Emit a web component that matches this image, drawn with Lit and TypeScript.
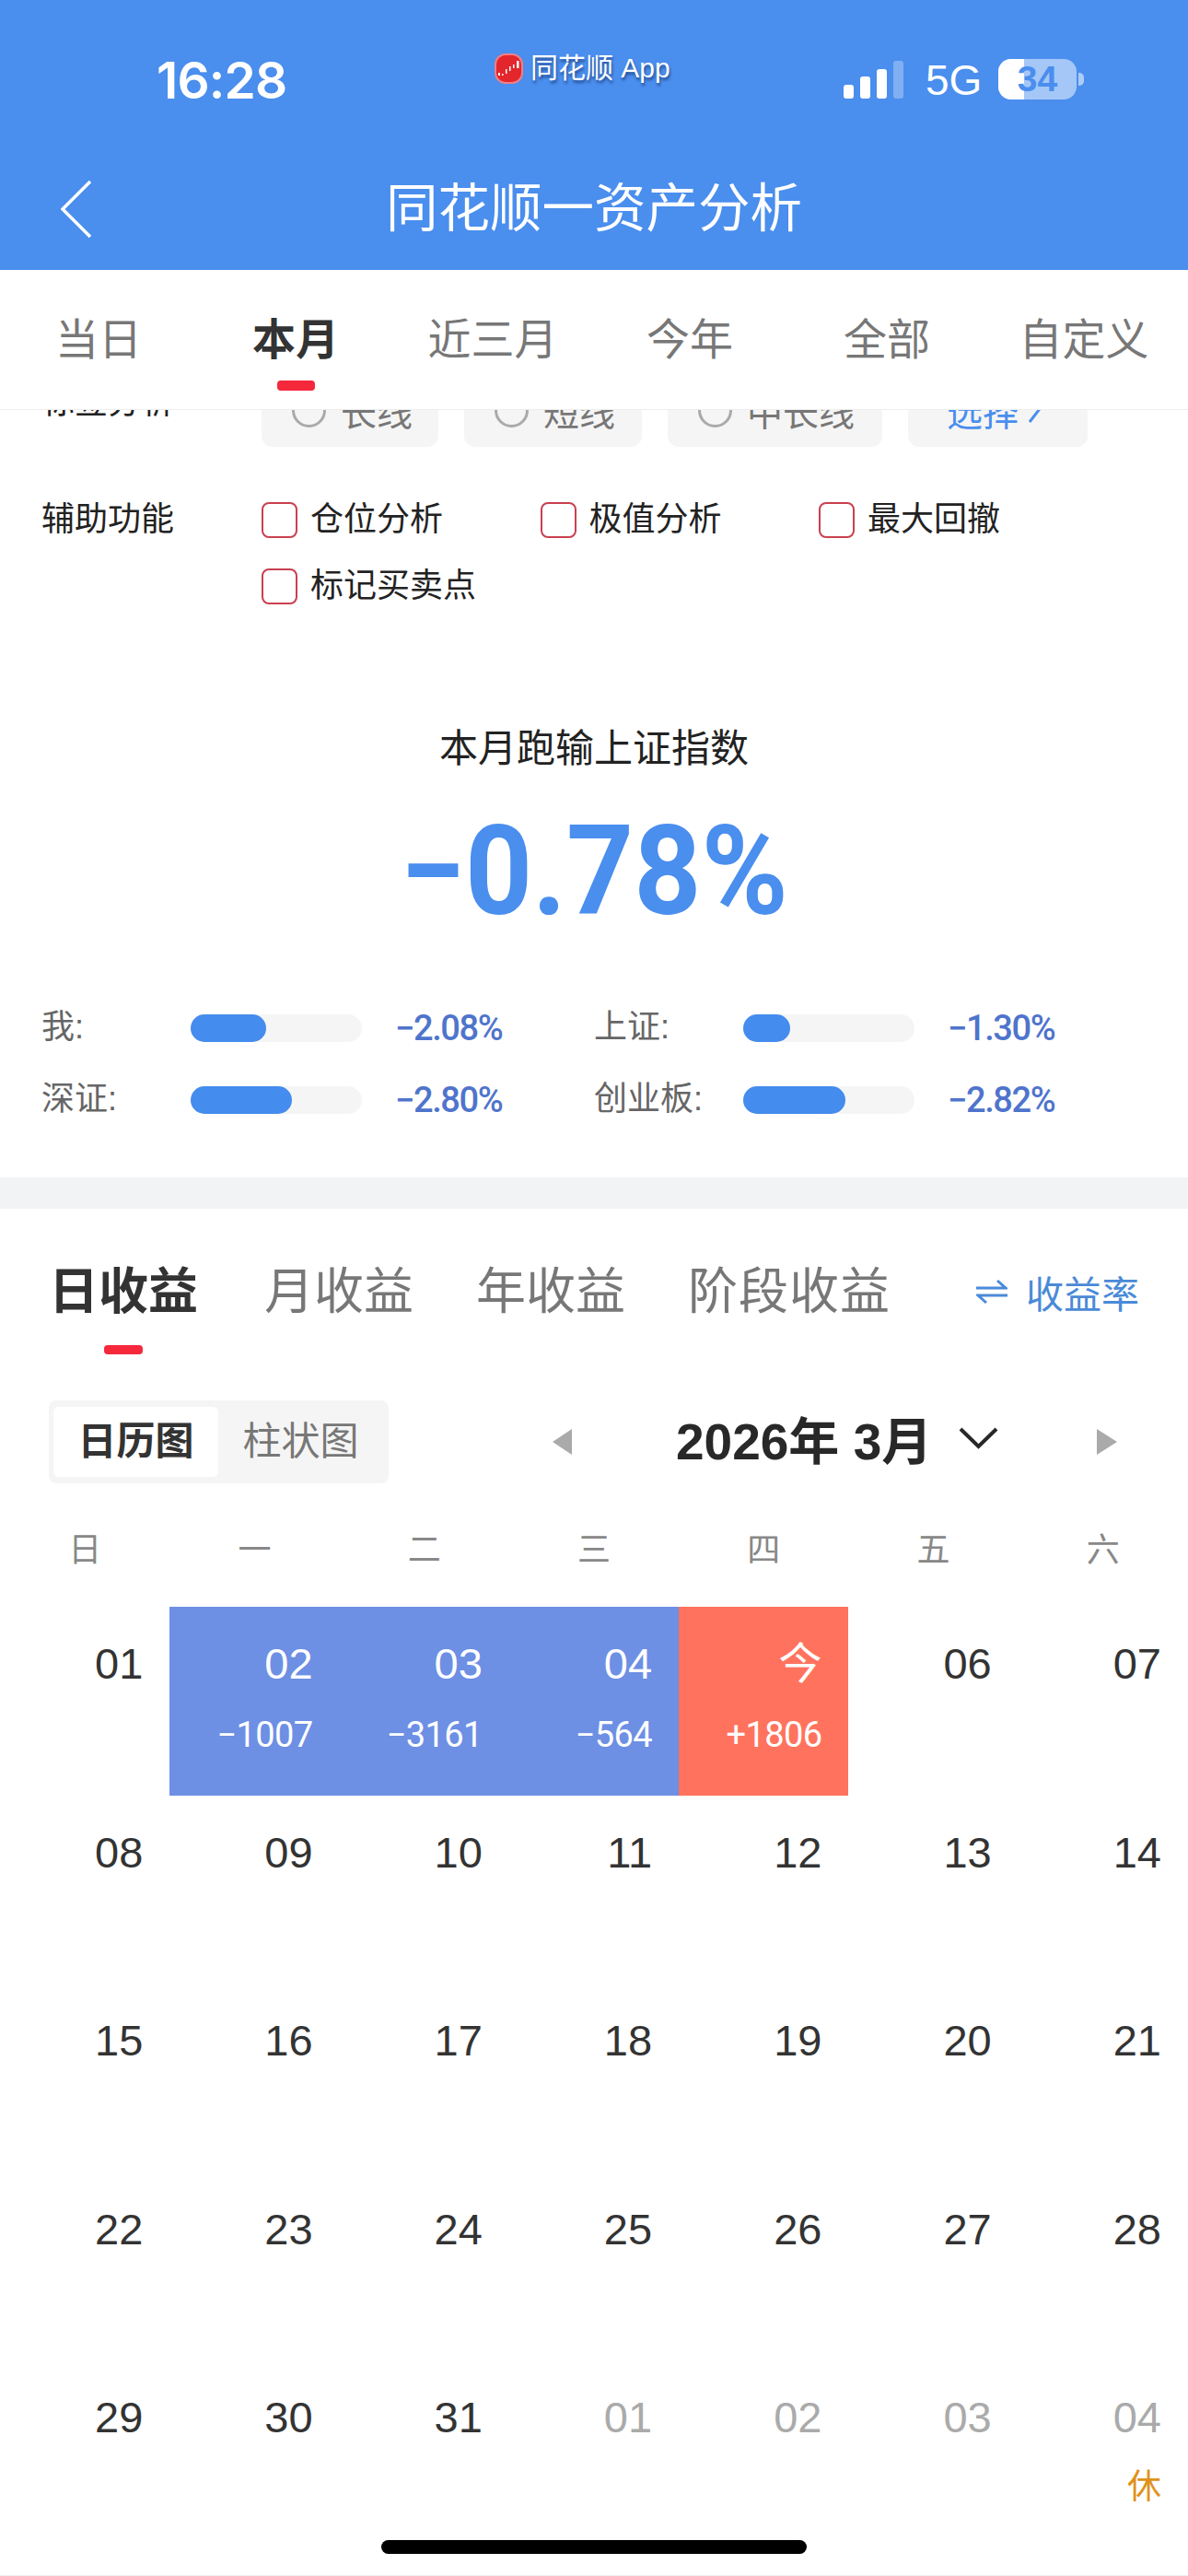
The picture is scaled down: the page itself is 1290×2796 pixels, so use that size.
import { LitElement, html, css, svg } from "lit";
import { customElement } from "lit/decorators.js";
import { classMap } from "lit/directives/class-map.js";

type Day = { d: string; sub?: string; kind?: "loss" | "gain" | "next"; rest?: string };

const DAYS: Day[] = [
  { d: "01" },
  { d: "02", sub: "−1007", kind: "loss" },
  { d: "03", sub: "−3161", kind: "loss" },
  { d: "04", sub: "−564", kind: "loss" },
  { d: "今", sub: "+1806", kind: "gain" },
  { d: "06" }, { d: "07" },
  ...["08","09","10","11","12","13","14","15","16","17","18","19","20","21","22","23","24","25","26","27","28","29","30","31"].map((d) => ({ d })),
  { d: "01", kind: "next" }, { d: "02", kind: "next" }, { d: "03", kind: "next" },
  { d: "04", kind: "next", rest: "休" },
] as Day[];

const STATS = [
  { label: "我:", fill: 82, value: "−2.08%" },
  { label: "上证:", fill: 51, value: "−1.30%" },
  { label: "深证:", fill: 110, value: "−2.80%" },
  { label: "创业板:", fill: 111, value: "−2.82%" },
];

@customElement("app-root")
export class AppRoot extends LitElement {
  static styles = css`
    :host {
      display: block; position: relative; width: 1290px; height: 2796px; overflow: hidden;
      background: #fff; box-sizing: border-box; border-bottom: 1px solid #eeeeee;
      font-family: "Liberation Sans", "Noto Sans CJK SC", sans-serif; color: #333;
    }
    svg { display: block; flex-shrink: 0; }
    .hdr { background: #4a8eee; height: 293px; color: #fff; }
    .status { height: 150px; display: flex; align-items: center; }
    .time { font-family: Inter, "Liberation Sans", sans-serif; font-weight: 600; font-size: 55px; line-height: 60px; margin-left: 170px; width: 367px; letter-spacing: -.8px; margin-top: 24px; }
    .appname { display: flex; align-items: center; width: 379px; font-size: 30px; line-height: 36px; text-shadow: 1px 3px 3px rgba(25, 55, 115, .75); gap: 8px; margin-top: -2px; }
    .logo { width: 31px; height: 33px; }
    .signal { display: flex; align-items: flex-end; gap: 7px; height: 41px; margin-top: 23px; }
    .signal i { width: 11px; background: #fff; border-radius: 3px; }
    .s1 { height: 15px; } .s2 { height: 24px; } .s3 { height: 32px; }
    .signal .s4 { height: 41px; background: rgba(255,255,255,.3); }
    .net { font-size: 46px; line-height: 50px; margin: 24px 0 0 24px; width: 79px; }
    .battery { position: relative; display: flex; margin-top: 22px; width: 85px; height: 44px; border-radius: 14px; overflow: hidden; background: rgba(255,255,255,.5); }
    .bfill { width: 28px; background: #fff; }
    .bnum { position: absolute; inset: 0; text-align: center; font-size: 39px; line-height: 44px; font-weight: 700; color: #4a8eee; }
    .nub { width: 6px; height: 14px; margin: 22px 0 0 2px; background: rgba(255,255,255,.55); border-radius: 0 5px 5px 0; }
    .nav { height: 143px; display: grid; grid-template-columns: 1fr auto 1fr; align-items: center; padding-top: 11px; box-sizing: border-box; }
    .back { margin-left: 66px; }
    .title { font-size: 56.5px; line-height: 70px; font-weight: 400; white-space: nowrap; }

    .tabs { display: grid; grid-template-columns: repeat(6, 214px); height: 152px; box-sizing: border-box; border-bottom: 1px solid #eeeeee; padding-top: 46px; }
    .tab { display: flex; flex-direction: column; align-items: center; font-size: 47px; line-height: 60px; color: #777; }
    .tab.on { color: #333; font-weight: 700; }
    .tab b { width: 41px; height: 11px; margin-top: 14px; border-radius: 4px; background: #f5283c; }

    .cut { height: 40px; overflow: hidden; display: flex; align-items: flex-end; padding-left: 45px; }
    .cut-label { width: 239px; flex-shrink: 0; font-size: 36px; line-height: 40px; margin-bottom: 28px; color: #222; white-space: nowrap; }
    .chips { display: flex; gap: 28px; }
    .chip { height: 70px; background: #f5f5f5; border-radius: 12px; display: flex; align-items: center; box-sizing: border-box; padding: 0 0 10px 33px; gap: 16px; font-size: 39px; color: #777; white-space: nowrap; }
    .chip:nth-child(1) { width: 192px; }
    .chip:nth-child(2) { width: 193px; }
    .chip:nth-child(3) { width: 233px; }
    .chip:nth-child(4) { width: 195px; padding-left: 42px; gap: 10px; color: #4a8eee; }
    .radio { width: 37px; height: 37px; border: 3px solid #aaa; border-radius: 50%; box-sizing: border-box; }

    .helpers { display: flex; padding: 59px 0 0 45px; }
    .help-label { width: 239px; flex-shrink: 0; font-size: 36px; line-height: 40px; color: #222; }
    .opts { display: flex; flex-wrap: wrap; width: 960px; row-gap: 32px; }
    .opt { width: 302.5px; display: flex; align-items: center; gap: 14px; font-size: 36px; line-height: 40px; color: #222; white-space: nowrap; }
    .box { width: 39px; height: 39px; border: 2px solid #c9404f; border-radius: 8px; box-sizing: border-box; flex-shrink: 0; }

    .head { text-align: center; font-size: 42px; line-height: 56px; color: #222; padding-top: 129px; }
    .big { text-align: center; font-family: Roboto, sans-serif; font-weight: 700; font-size: 135px; line-height: 140px; color: #4a8eee; margin-top: 35px; transform: scaleX(.945); }
    .stats { display: grid; grid-template-columns: 600px 600px; row-gap: 38px; padding: 80px 0 64px 45px; }
    .stat { display: flex; align-items: center; height: 40px; }
    .stat-label { width: 162px; font-size: 36px; line-height: 40px; color: #666; white-space: nowrap; margin-top: -2px; }
    .track { width: 186px; height: 30px; border-radius: 15px; background: #f5f5f5; margin-right: 36px; }
    .fill { height: 30px; border-radius: 15px; background: #448ced; }
    .stat-val { font-family: Roboto, sans-serif; font-weight: 500; font-size: 38px; color: #4f74cc; letter-spacing: -1.4px; white-space: nowrap; }
    .gap { height: 34px; background: #f2f3f5; }

    .rtabs { display: flex; align-items: center; padding: 55px 53px 0 53px; height: 125px; box-sizing: border-box; gap: 68px; }
    .rtab { font-size: 54px; line-height: 70px; color: #777; white-space: nowrap; }
    .rtab.on { color: #333; font-weight: 700; margin-right: 4px; }
    .rtab:nth-child(4) { letter-spacing: 1px; }
    .rate { margin-left: auto; display: flex; align-items: center; gap: 20px; color: #4a8ad8; font-size: 41px; white-space: nowrap; }
    .ind { width: 42px; height: 10px; border-radius: 4px; background: #f5283c; margin: 23px 0 0 113px; }

    .ctrl { display: flex; align-items: center; margin: 50px 0 0 53px; height: 90px; }
    .seg { width: 369px; height: 90px; background: #f5f5f5; border-radius: 8px; padding: 7px 5px; box-sizing: border-box; display: flex; }
    .seg span { width: 179px; height: 76px; line-height: 76px; text-align: center; font-size: 42px; color: #777; border-radius: 6px; }
    .seg span.on { background: #fff; color: #333; font-weight: 700; }
    .tl { margin-left: 178px; }
    .month { margin-left: 113px; width: 271px; font-size: 55px; line-height: 70px; font-weight: 700; white-space: nowrap; color: #282828; }
    .chev { margin: -8px 0 0 36px; }
    .tr { margin-left: 107px; }

    .week { display: grid; grid-template-columns: repeat(7, 1fr); padding-top: 51px; text-align: center; font-size: 36px; line-height: 44px; color: #888; }
    .cal { display: grid; grid-template-columns: repeat(7, 1fr); grid-auto-rows: 204.5px; margin-top: 39px; }
    .cell { text-align: right; padding: 37px 29px 0 0; box-sizing: border-box; }
    .num { font-size: 47px; line-height: 50px; color: #333; }
    .sub { font-family: Roboto, sans-serif; font-size: 38px; line-height: 44px; margin-top: 30px; letter-spacing: -.6px; color: #fff; }
    .rest { font-size: 37px; line-height: 44px; margin-top: 29px; color: #e0921c; }
    .loss { background: #6d8fe4; }
    .gain { background: #ff735e; }
    .loss .num, .gain .num { color: #fff; }
    .next .num { color: #aaa; }
    .home { position: absolute; left: 414px; top: 2757px; width: 462px; height: 15px; border-radius: 7.5px; background: #000; }
  `;

  private logoIcon() {
    return svg`<svg class="logo" viewBox="0 0 31 33">
      <rect x="1" y="1" width="29" height="31" rx="11" fill="#e3262b" stroke="#ee7f86" stroke-width="2"/>
      <path d="M4 21h2v3H4zM8 22h1.500v2H8zM12 17h1.500v5H12zM16 14h1.500v5H16zM20 12h1.500v4H20zM24 8h2.500v8H24z" fill="#fff"/>
    </svg>`;
  }

  render() {
    return html`
      <div class="hdr">
        <div class="status">
          <div class="time">16:28</div>
          <div class="appname">${this.logoIcon()}<span>同花顺 App</span></div>
          <div class="signal"><i class="s1"></i><i class="s2"></i><i class="s3"></i><i class="s4"></i></div>
          <div class="net">5G</div>
          <div class="battery"><div class="bfill"></div><div class="bnum">34</div></div>
          <div class="nub"></div>
        </div>
        <div class="nav">
          <svg class="back" width="34" height="62" viewBox="0 0 34 62"><path d="M32 1 2 31l30 30" fill="none" stroke="#fff" stroke-width="3.5"/></svg>
          <div class="title">同花顺一资产分析</div>
          <span></span>
        </div>
      </div>

      <div class="tabs">
        ${["当日", "本月", "近三月", "今年", "全部", "自定义"].map((t, i) => html`
          <div class=${classMap({ tab: true, on: i === 1 })}><span>${t}</span>${i === 1 ? html`<b></b>` : ""}</div>`)}
      </div>

      <div class="cut">
        <div class="cut-label">标签分析</div>
        <div class="chips">
          ${["长线", "短线", "中长线"].map((t) => html`<div class="chip"><span class="radio"></span>${t}</div>`)}
          <div class="chip">选择
            <svg width="14" height="30" viewBox="0 0 14 30"><path d="M2 2l10 13L2 28" fill="none" stroke="#4a8eee" stroke-width="3"/></svg>
          </div>
        </div>
      </div>

      <div class="helpers">
        <div class="help-label">辅助功能</div>
        <div class="opts">
          ${["仓位分析", "极值分析", "最大回撤", "标记买卖点"].map((t) => html`<div class="opt"><span class="box"></span>${t}</div>`)}
        </div>
      </div>

      <div class="head">本月跑输上证指数</div>
      <div class="big">−0.78%</div>
      <div class="stats">
        ${STATS.map((s) => html`
          <div class="stat">
            <div class="stat-label">${s.label}</div>
            <div class="track"><div class="fill" style="width:${s.fill}px"></div></div>
            <div class="stat-val">${s.value}</div>
          </div>`)}
      </div>
      <div class="gap"></div>

      <div class="rtabs">
        ${["日收益", "月收益", "年收益", "阶段收益"].map((t, i) => html`<div class=${classMap({ rtab: true, on: i === 0 })}>${t}</div>`)}
        <div class="rate">
          <svg width="34" height="28" viewBox="0 0 34 28"><path d="M0 10h32L23 2M34 18H2l9 8" fill="none" stroke="#4a8ad8" stroke-width="3"/></svg>
          收益率
        </div>
      </div>
      <div class="ind"></div>

      <div class="ctrl">
        <div class="seg"><span class="on">日历图</span><span>柱状图</span></div>
        <svg class="tl" width="21" height="28" viewBox="0 0 21 28"><path d="M21 0v28L0 14z" fill="#aaa"/></svg>
        <div class="month">2026年 3月</div>
        <svg class="chev" width="43" height="24" viewBox="0 0 43 24"><path d="M2 2l19.500 19L41 2" fill="none" stroke="#282828" stroke-width="4"/></svg>
        <svg class="tr" width="22" height="28" viewBox="0 0 22 28"><path d="M0 0v28l22-14z" fill="#aaa"/></svg>
      </div>

      <div class="week">${["日", "一", "二", "三", "四", "五", "六"].map((w) => html`<span>${w}</span>`)}</div>

      <div class="cal">
        ${DAYS.map((c) => html`
          <div class=${classMap({ cell: true, loss: c.kind === "loss", gain: c.kind === "gain", next: c.kind === "next" })}>
            <div class="num">${c.d}</div>
            ${c.sub ? html`<div class="sub">${c.sub}</div>` : ""}
            ${c.rest ? html`<div class="rest">${c.rest}</div>` : ""}
          </div>`)}
      </div>
      <div class="home"></div>
    `;
  }
}
